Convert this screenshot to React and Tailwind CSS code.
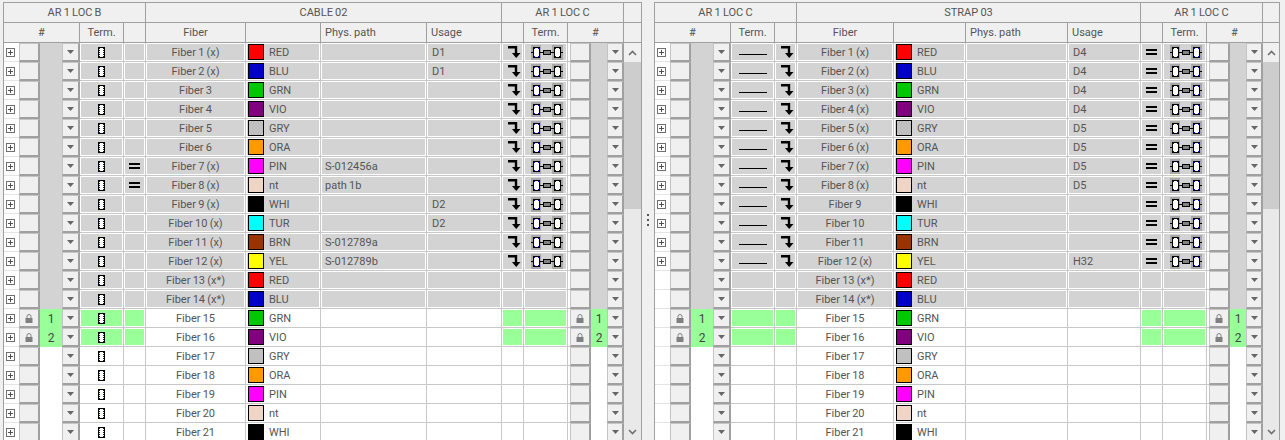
const COLORS = {
  RED: "bg-[#ff0000]",
  BLU: "bg-[#0000c8]",
  GRN: "bg-[#00c800]",
  VIO: "bg-[#800080]",
  GRY: "bg-[#c0c0c0]",
  ORA: "bg-[#ff9900]",
  PIN: "bg-[#ff00ff]",
  nt: "bg-[#eed5c5]",
  WHI: "bg-black",
  TUR: "bg-[#00ffff]",
  BRN: "bg-[#993300]",
  YEL: "bg-[#ffff00]",
};

const LEFT_COLS =
  "grid-cols-[15px_21px_22px_18px_44px_22px_100px_75px_106px_75px_22px_44px_56px]";
const RIGHT_COLS =
  "grid-cols-[15px_21px_22px_18px_44px_22px_97px_72px_102px_73px_22px_44px_56px]";

const NAMES = ["RED", "BLU", "GRN", "VIO", "GRY", "ORA", "PIN", "nt", "WHI", "TUR", "BRN", "YEL"];

const colorName = (i) => NAMES[i % 12];

const leftFibers = [
  "Fiber 1 (x)", "Fiber 2 (x)", "Fiber 3", "Fiber 4", "Fiber 5", "Fiber 6", "Fiber 7 (x)",
  "Fiber 8 (x)", "Fiber 9 (x)", "Fiber 10 (x)", "Fiber 11 (x)", "Fiber 12 (x)", "Fiber 13 (x*)",
  "Fiber 14 (x*)", "Fiber 15", "Fiber 16", "Fiber 17", "Fiber 18", "Fiber 19", "Fiber 20", "Fiber 21",
];
const rightFibers = [
  "Fiber 1 (x)", "Fiber 2 (x)", "Fiber 3 (x)", "Fiber 4 (x)", "Fiber 5 (x)", "Fiber 6 (x)", "Fiber 7 (x)",
  "Fiber 8 (x)", "Fiber 9", "Fiber 10", "Fiber 11", "Fiber 12 (x)", "Fiber 13 (x*)",
  "Fiber 14 (x*)", "Fiber 15", "Fiber 16", "Fiber 17", "Fiber 18", "Fiber 19", "Fiber 20", "Fiber 21",
];
const leftUsage = { 0: "D1", 1: "D1", 8: "D2", 9: "D2" };
const leftPath = { 6: "S-012456a", 7: "path 1b", 10: "S-012789a", 11: "S-012789b" };
const rightUsage = { 0: "D4", 1: "D4", 2: "D4", 3: "D4", 4: "D5", 5: "D5", 6: "D5", 7: "D5", 11: "H32" };

const PlusBox = () => (
  <svg width="9" height="9" viewBox="0 0 9 9" className="block">
    <rect x="0.5" y="0.5" width="8" height="8" fill="#fff" stroke="#707070" />
    <path d="M2 4.5h5M4.5 2v5" stroke="#505050" />
  </svg>
);

const Lock = () => (
  <svg width="8" height="9" viewBox="0 0 8 9" className="block">
    <path d="M2 4V2.5a2 2 0 0 1 4 0V4" fill="none" stroke="#808080" />
    <rect x="0.5" y="4" width="7" height="5" fill="#808080" />
  </svg>
);

const Caret = () => (
  <svg width="7" height="4" viewBox="0 0 7 4" className="block">
    <path d="M0 0h7L3.5 4z" fill="#666" />
  </svg>
);

const Chevron = ({ down }) => (
  <svg width="9" height="6" viewBox="0 0 9 6" className="block">
    <path d={down ? "M1 1l3.5 3.5L8 1" : "M1 5l3.5-3.5L8 5"} fill="none" stroke="#707070" strokeWidth="1.6" />
  </svg>
);

const BLUE_DOTS = [1, 3, 5, 7, 9];

const TermSingle = () => (
  <svg width="7" height="11" viewBox="0 0 7 11" className="block">
    <rect width="7" height="11" fill="#000" />
    <rect x="1" y="1" width="5" height="9" fill="#fff" />
    {BLUE_DOTS.map((y) => (
      <g key={y}>
        <rect x="1" y={y} width="1" height="1" fill="#0000e0" />
        <rect x="5" y={y} width="1" height="1" fill="#0000e0" />
      </g>
    ))}
  </svg>
);

const TermPair = () => (
  <svg width="32" height="15" viewBox="0 0 32 15" className="block ml-[2px]">
    <rect x="0" y="0" width="10" height="15" fill="#a8a8a8" />
    <rect x="21" y="0" width="11" height="15" fill="#a8a8a8" />
    <path d="M0 7.5h32" stroke="#000" />
    <rect x="2" y="2" width="7" height="11" fill="#000" />
    <rect x="3" y="3" width="5" height="9" fill="#fff" />
    <rect x="23" y="2" width="7" height="11" fill="#000" />
    <rect x="24" y="3" width="5" height="9" fill="#fff" />
    <rect x="3" y="3" width="1" height="1" fill="#0000e0" />
    <rect x="7" y="3" width="1" height="1" fill="#0000e0" />
    <rect x="3" y="11" width="1" height="1" fill="#0000e0" />
    <rect x="7" y="11" width="1" height="1" fill="#0000e0" />
    <rect x="24" y="3" width="1" height="1" fill="#0000e0" />
    <rect x="28" y="3" width="1" height="1" fill="#0000e0" />
    <rect x="24" y="11" width="1" height="1" fill="#0000e0" />
    <rect x="28" y="11" width="1" height="1" fill="#0000e0" />
    <rect x="12.5" y="5.5" width="7" height="4" fill="#808080" stroke="#000" />
  </svg>
);

const ArrowIcon = () => (
  <svg width="14" height="12" viewBox="0 0 14 12" className="block ml-[2px]">
    <path d="M1 1.2h8V8" fill="none" stroke="#000" strokeWidth="2.4" />
    <path d="M5 7h8.5L9.2 12z" fill="#000" />
  </svg>
);

const EqualIcon = () => (
  <div className="flex flex-col gap-[2px]">
    <div className="w-[11px] h-[2px] bg-black" />
    <div className="w-[11px] h-[2px] bg-black" />
  </div>
);

const LineIcon = () => <div className="w-[28px] h-px bg-black mt-[5px]" />;

// fill colour of the inset blocks in a row
const fillFor = (tone) => {
  if (tone === "gray") return "bg-[#d3d3d3]";
  if (tone === "green") return "bg-[#99ff99]";
  return "bg-white";
};

const Cell = ({ tone = "white", className = "", children }) => (
  <div className="border-r border-b border-[#c8c8c8] bg-white h-[19px] min-w-0">
    <div className={`m-px h-[16px] flex items-center ${fillFor(tone)} ${className}`}>{children}</div>
  </div>
);

const SpinBox = ({ children, className = "" }) => (
  <div
    className={`h-[19px] bg-[#f0f0f0] border-t border-l border-r-2 border-b-2 border-t-[#c4c4c4] border-l-[#c4c4c4] border-r-[#a0a0a0] border-b-[#a0a0a0] flex items-center justify-center ${className}`}
  >
    {children}
  </div>
);

const NumberPicker = ({ tone, num }) => (
  <>
    <SpinBox>{num ? <Lock /> : null}</SpinBox>
    <div className={`h-[19px] flex items-center justify-center text-[#444] text-[12px] ${fillFor(tone)}`}>
      {num}
    </div>
  </>
);

const RowCells = ({ i, fiber, usage, path, tone, leftTone, expand, num, term1, mid, col1, term2 }) => {
  const name = colorName(i);
  return (
    <>
      <div className="h-[19px] bg-white flex items-center justify-center border-b border-[#e4e4e4] pr-[2px]">
        {expand && <PlusBox />}
      </div>
      <NumberPicker tone={leftTone} num={num} />
      <SpinBox>
        <Caret />
      </SpinBox>
      <Cell tone={leftTone} className="justify-center">{term1}</Cell>
      <Cell tone={leftTone} className="justify-center">{mid}</Cell>
      <Cell tone={tone} className="justify-center">{fiber}</Cell>
      <Cell tone={tone}>
        <div className={`w-[16px] h-[16px] ml-px border border-black shrink-0 ${COLORS[name]}`} />
        <span className="ml-[5px]">{name}</span>
      </Cell>
      <Cell tone={tone} className="pl-[3px]">{path}</Cell>
      <Cell tone={tone} className="pl-[4px]">{usage}</Cell>
      <Cell tone={leftTone} className="justify-center">{col1}</Cell>
      <Cell tone={leftTone} className="justify-center">{term2}</Cell>
      <div className="grid grid-cols-[2px_21px_16px_17px] h-[19px] bg-white">
        <div className="border-b border-[#c8c8c8]" />
        <NumberPicker tone={leftTone} num={num} />
        <SpinBox>
          <Caret />
        </SpinBox>
      </div>
    </>
  );
};

const toneOf = (i) => (i < 14 ? "gray" : "white");
const sideToneOf = (i) => (i < 14 ? "gray" : i < 16 ? "green" : "white");
const numOf = (i) => (i === 14 ? "1" : i === 15 ? "2" : null);

const HeadCell = ({ className = "", children }) => (
  <div className={`h-[20px] flex items-center justify-center border-r border-b border-[#a0a0a0] ${className}`}>
    {children}
  </div>
);

const Header = ({ cols, titles }) => (
  <>
    <div className={`grid ${cols} w-max`}>
      <HeadCell className="col-span-6">{titles[0]}</HeadCell>
      <HeadCell className="col-span-4">{titles[1]}</HeadCell>
      <HeadCell className="col-span-3">{titles[2]}</HeadCell>
    </div>
    <div className={`grid ${cols} w-max`}>
      <HeadCell className="col-span-4">#</HeadCell>
      <HeadCell>Term.</HeadCell>
      <HeadCell />
      <HeadCell>Fiber</HeadCell>
      <HeadCell />
      <HeadCell className="justify-start pl-[4px]">Phys. path</HeadCell>
      <HeadCell className="justify-start pl-[4px]">Usage</HeadCell>
      <HeadCell />
      <HeadCell>Term.</HeadCell>
      <HeadCell>#</HeadCell>
    </div>
  </>
);

const ScrollBar = () => (
  <div className="flex flex-col h-full w-full bg-[#e9e9e9]">
    <div className="h-[19px] bg-[#f0f0f0] flex items-center justify-center">
      <Chevron />
    </div>
    <div className="h-[147px] bg-[#cdcdcd]" />
    <div className="flex-1" />
    <div className="h-[17px] flex items-center justify-center">
      <Chevron down />
    </div>
  </div>
);

const Panel = ({ cols, titles, scrollW, headW, children }) => (
  <div className={`border-l border-t border-[#a0a0a0] ${headW} h-[438px] overflow-hidden shrink-0`}>
    <div className="flex">
      <div>
        <Header cols={cols} titles={titles} />
      </div>
      <div className={`${scrollW} shrink-0`}>
        <HeadCell />
        <HeadCell />
      </div>
    </div>
    <div className="flex h-[397px]">
      <div className={`grid ${cols} w-max content-start h-[397px] overflow-hidden`}>{children}</div>
      <div className={`${scrollW} shrink-0 border-r border-[#a0a0a0]`}>
        <ScrollBar />
      </div>
    </div>
  </div>
);

export default function App() {
  return (
    <div className="flex h-[440px] w-[1285px] overflow-hidden bg-[#f0f0f0] pt-[2px] pl-[3px] text-[11px] leading-none text-[#555] [word-spacing:-0.5px] font-['Roboto',sans-serif]">
      <Panel cols={LEFT_COLS} titles={["AR 1 LOC B", "CABLE 02", "AR 1 LOC C"]} scrollW="w-[18px]" headW="w-[639px]">
        {leftFibers.map((fiber, i) => (
          <RowCells
            key={fiber}
            i={i}
            fiber={fiber}
            usage={leftUsage[i]}
            path={leftPath[i]}
            tone={toneOf(i)}
            leftTone={sideToneOf(i)}
            expand
            num={numOf(i)}
            term1={<TermSingle />}
            mid={i === 6 || i === 7 ? <EqualIcon /> : null}
            col1={i < 12 ? <ArrowIcon /> : null}
            term2={i < 12 ? <TermPair /> : null}
          />
        ))}
      </Panel>

      <div className="w-[12px] shrink-0 h-full flex flex-col items-center justify-center gap-[3px] -mt-[1px]">
        <div className="w-[2px] h-[2px] bg-[#555]" />
        <div className="w-[2px] h-[2px] bg-[#555]" />
        <div className="w-[2px] h-[2px] bg-[#555]" />
      </div>

      <Panel cols={RIGHT_COLS} titles={["AR 1 LOC C", "STRAP 03", "AR 1 LOC C"]} scrollW="w-[17px]" headW="w-[626px]">
        {rightFibers.map((fiber, i) => (
          <RowCells
            key={fiber}
            i={i}
            fiber={fiber}
            usage={rightUsage[i]}
            tone={toneOf(i)}
            leftTone={sideToneOf(i)}
            expand={i < 12}
            num={numOf(i)}
            term1={i < 12 ? <LineIcon /> : null}
            mid={i < 12 ? <ArrowIcon /> : null}
            col1={i < 12 ? <EqualIcon /> : null}
            term2={i < 12 ? <TermPair /> : null}
          />
        ))}
      </Panel>
    </div>
  );
}
